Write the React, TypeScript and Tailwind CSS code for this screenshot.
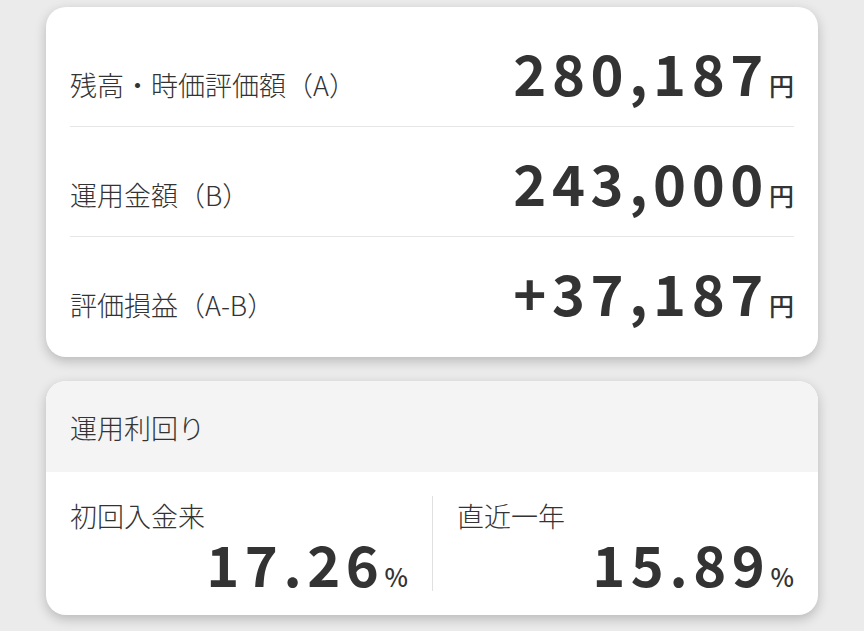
import React from "react";

const jp = "font-['Noto_Sans_CJK_JP',_'Noto_Sans',_sans-serif]";

function AmountRow({ label, value, last }: { label: string; value: string; last?: boolean }) {
  return (
    <div className={`flex h-[110px] items-center ${last ? "" : "border-b border-[#e6e6e6]"}`}>
      <div className="flex w-full items-baseline justify-between">
        <span className="text-[27px] font-light leading-none text-[#333]">{label}</span>
        <span className="flex items-baseline text-[#333]">
          <span className="text-[56px] font-bold tracking-[0.1em] leading-none">{value}</span>
          <span className="text-[25px] font-medium leading-none">円</span>
        </span>
      </div>
    </div>
  );
}

function Rate({ label, value, border }: { label: string; value: string; border?: boolean }) {
  return (
    <div className={`flex flex-col px-6 pt-[6px] ${border ? "border-l border-[#e0e0e0]" : ""}`}>
      <span className="text-[27px] font-light leading-none text-[#333]">{label}</span>
      <span className="mt-[6px] flex items-baseline justify-end text-[#333]">
        <span className="text-[56px] font-bold tracking-[0.1em] leading-none">{value}</span>
        <span className="text-[25px] font-medium leading-none">%</span>
      </span>
    </div>
  );
}

export default function App() {
  return (
    <div className={`${jp} min-h-screen bg-[#ebebeb] px-[46px] pt-[7px]`}>
      <div className="rounded-[20px] bg-white px-6 py-[10px] shadow-[0_4px_12px_rgba(0,0,0,0.22)]">
        <AmountRow label="残高・時価評価額（A）" value="280,187" />
        <AmountRow label="運用金額（B）" value="243,000" />
        <AmountRow label="評価損益（A-B）" value="+37,187" last />
      </div>

      <div className="mt-6 overflow-hidden rounded-[20px] bg-white shadow-[0_4px_12px_rgba(0,0,0,0.22)]">
        <div className="flex h-[91px] items-center bg-[#f4f4f4] px-6 pt-1 text-[27px] font-light text-[#333]">運用利回り</div>
        <div className="grid grid-cols-2 py-6">
          <Rate label="初回入金来" value="17.26" />
          <Rate label="直近一年" value="15.89" border />
        </div>
      </div>
    </div>
  );
}
